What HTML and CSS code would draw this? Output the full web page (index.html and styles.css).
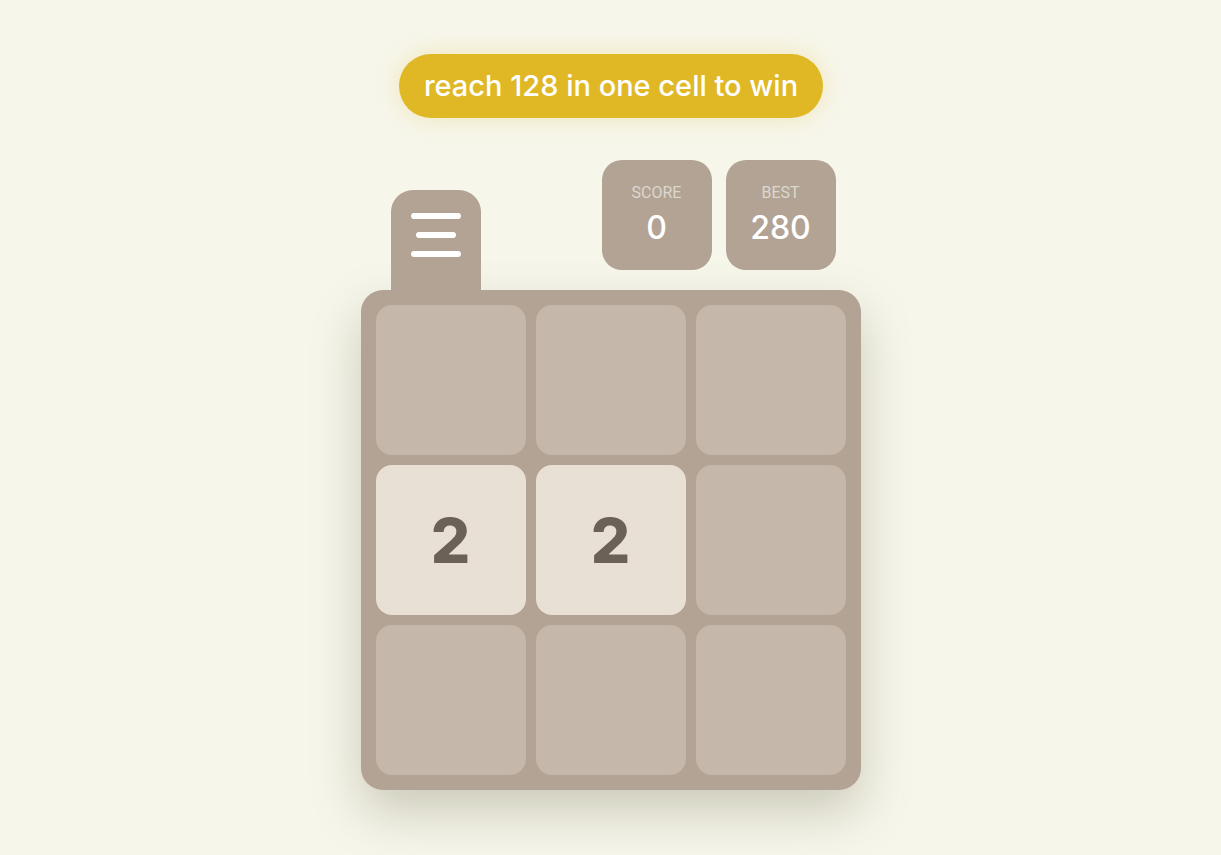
FILE: index.html
```html
<!DOCTYPE html>
<html lang="en">
<head>
<meta charset="utf-8">
<title>128</title>
<link rel="stylesheet" href="styles.css">
</head>
<body>
<main class="page">
  <div class="goal">reach 128 in one cell to win</div>
  <section class="game">
    <div class="top">
      <button class="menu" aria-label="menu">
        <span class="bar bar-long"></span>
        <span class="bar bar-short"></span>
        <span class="bar bar-long"></span>
      </button>
      <div class="scores">
        <div class="score">
          <div class="score-label">SCORE</div>
          <div class="score-value">0</div>
        </div>
        <div class="score">
          <div class="score-label">BEST</div>
          <div class="score-value">280</div>
        </div>
      </div>
    </div>
    <div class="board">
      <div class="cell"></div>
      <div class="cell"></div>
      <div class="cell"></div>
      <div class="cell tile-2">2</div>
      <div class="cell tile-2">2</div>
      <div class="cell"></div>
      <div class="cell"></div>
      <div class="cell"></div>
      <div class="cell"></div>
    </div>
  </section>
</main>
</body>
</html>
```
FILE: styles.css
```css
* { box-sizing: border-box; }
html, body {
  margin: 0;
  padding: 0;
  background: #f7f6eb;
  height: 100%;
}
body {
  font-family: "Inter", "Noto Sans", sans-serif;
}
.page {
  display: flex;
  flex-direction: column;
  align-items: center;
  padding-top: 54px;
}
.goal {
  height: 64px;
  padding: 0 25px;
  border-radius: 32px;
  background: #e0b825;
  color: #fff;
  font-size: 29px;
  font-weight: 500;
  line-height: 64px;
  box-shadow: 0 0 24px rgba(224, 184, 37, 0.25);
  margin-left: 1px;
}
.game {
  width: 500px;
  margin-top: 42px;
}
.top {
  display: flex;
  justify-content: space-between;
  align-items: flex-end;
  padding: 0 25px 0 30px;
  height: 130px;
}
.menu {
  width: 90px;
  height: 100px;
  border: 0;
  background: #b3a394;
  border-radius: 22px 22px 0 0;
  display: flex;
  flex-direction: column;
  align-items: center;
  gap: 13px;
  padding: 23px 0 0;
  cursor: pointer;
}
.bar {
  display: block;
  height: 6px;
  border-radius: 3px;
  background: #fff;
}
.bar-long { width: 50px; }
.bar-short { width: 40px; }
.scores {
  display: flex;
  gap: 14px;
  align-self: flex-start;
}
.score {
  width: 110px;
  height: 110px;
  border-radius: 20px;
  background: #b3a394;
  display: flex;
  flex-direction: column;
  align-items: center;
  padding-top: 24px;
}
.score-label {
  font-family: "Roboto", sans-serif;
  font-size: 16px;
  color: #dcd8d0;
  line-height: 18px;
}
.score-value {
  font-size: 32px;
  font-weight: 500;
  color: #fff;
  line-height: 36px;
  margin-top: 8px;
}
.board {
  width: 500px;
  height: 500px;
  padding: 15px;
  background: #b3a394;
  border-radius: 22px;
  display: grid;
  grid-template-columns: repeat(3, 150px);
  grid-template-rows: repeat(3, 150px);
  gap: 10px;
  box-shadow: 0 22px 50px rgba(110, 110, 80, 0.32);
}
.cell {
  background: #c5b7aa;
  border-radius: 16px;
  display: flex;
  align-items: center;
  justify-content: center;
  font-size: 62px;
  font-weight: 800;
  color: #6b6157;
}
.tile-2 {
  background: #e9e0d5;
}
```
